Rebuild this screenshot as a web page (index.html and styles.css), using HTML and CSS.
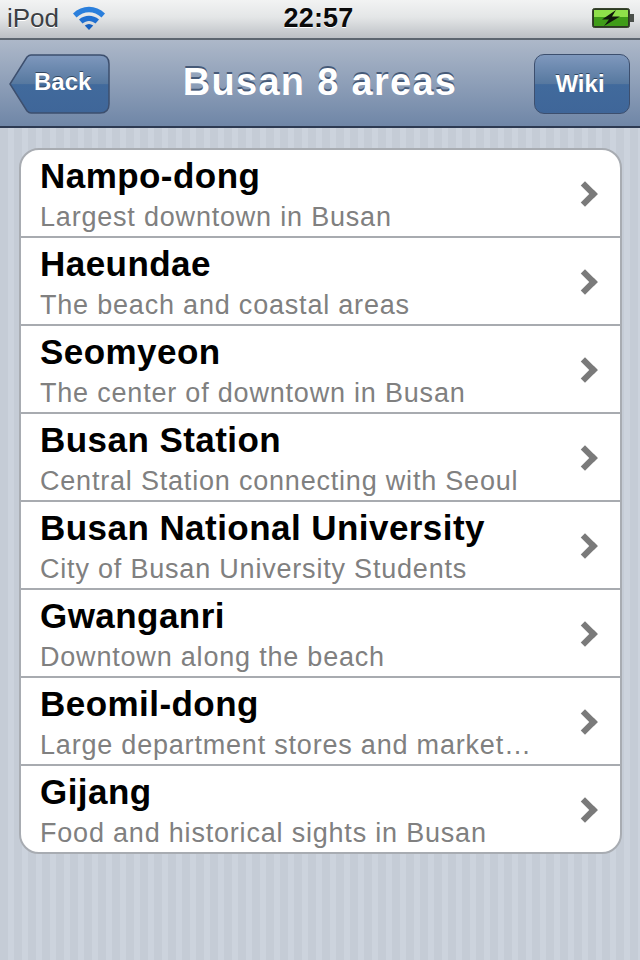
FILE: index.html

```html
<!DOCTYPE html>
<html lang="en">
<head>
    <meta charset="UTF-8">
    <meta name="viewport" content="width=device-width, initial-scale=1.0">
    <title>Busan 8 areas</title>
    <link rel="stylesheet" href="styles.css">
</head>
<body>
    <div class="status-bar">
        <div class="status-left">
            <span class="carrier">iPod</span>
            <svg class="wifi" width="32" height="24" viewBox="0 0 32 24">
                <path d="M0 7.500C9 -1.500 23 -1.500 32 7.500L28.500 11.500C21 4.500 11 4.500 3.500 11.500Z" fill="#2a7fdc"/>
                <path d="M6 13.500C12 8.500 20 8.500 26 13.500L22.500 17.500C18.500 14 13.500 14 9.500 17.500Z" fill="#1f6fd0"/>
                <path d="M16 24L11.800 19.500C14.500 17.500 17.500 17.500 20.200 19.500Z" fill="#1560c0"/>
            </svg>
        </div>
        <div class="clock">22:57</div>
        <div class="status-right">
            <svg class="battery" width="42" height="21" viewBox="0 0 42 21">
                <rect x="0.500" y="0.500" width="37" height="19" rx="2" fill="#2b3a22" stroke="#39452f"/>
                <rect x="2" y="2" width="34" height="16" fill="#3f9c18"/>
                <rect x="2" y="2" width="34" height="7" fill="#8fe04a"/>
                <rect x="38" y="6" width="4" height="8" fill="#4a4f4a"/>
                <path d="M24 2L10 11.500H17L12 18L28 8.500H20Z" fill="#10180c"/>
            </svg>
        </div>
    </div>

    <div class="nav-bar">
        <a class="back-btn">
            <svg class="back-shape" width="101" height="60" viewBox="0 0 101 60">
                <defs>
                    <linearGradient id="back-fill" x1="0" y1="0" x2="0" y2="1">
                        <stop offset="0" stop-color="#7f98bd"/>
                        <stop offset="0.500" stop-color="#56789f"/>
                        <stop offset="0.510" stop-color="#416a9c"/>
                        <stop offset="1" stop-color="#3f6699"/>
                    </linearGradient>
                </defs>
                <path d="M22 1H91Q100 1 100 10V50Q100 59 91 59H22Q20 59 18 57L1 30L18 3Q20 1 22 1Z" fill="url(#back-fill)" stroke="#3d4f6e" stroke-width="1.500"/>
            </svg>
            <span class="back-label">Back</span>
        </a>
        <h1 class="nav-title">Busan 8 areas</h1>
        <a class="wiki-btn">Wiki</a>
    </div>

    <ul class="area-list">
        <li class="area-row">
            <div class="area-text">
                <div class="area-name">Nampo-dong</div>
                <div class="area-desc">Largest downtown in Busan</div>
            </div>
            <span class="chevron"></span>
        </li>
        <li class="area-row">
            <div class="area-text">
                <div class="area-name">Haeundae</div>
                <div class="area-desc">The beach and coastal areas</div>
            </div>
            <span class="chevron"></span>
        </li>
        <li class="area-row">
            <div class="area-text">
                <div class="area-name">Seomyeon</div>
                <div class="area-desc">The center of downtown in Busan</div>
            </div>
            <span class="chevron"></span>
        </li>
        <li class="area-row">
            <div class="area-text">
                <div class="area-name">Busan Station</div>
                <div class="area-desc">Central Station connecting with Seoul</div>
            </div>
            <span class="chevron"></span>
        </li>
        <li class="area-row">
            <div class="area-text">
                <div class="area-name">Busan National University</div>
                <div class="area-desc">City of Busan University Students</div>
            </div>
            <span class="chevron"></span>
        </li>
        <li class="area-row">
            <div class="area-text">
                <div class="area-name">Gwanganri</div>
                <div class="area-desc">Downtown along the beach</div>
            </div>
            <span class="chevron"></span>
        </li>
        <li class="area-row">
            <div class="area-text">
                <div class="area-name">Beomil-dong</div>
                <div class="area-desc">Large department stores and market…</div>
            </div>
            <span class="chevron"></span>
        </li>
        <li class="area-row">
            <div class="area-text">
                <div class="area-name">Gijang</div>
                <div class="area-desc">Food and historical sights in Busan</div>
            </div>
            <span class="chevron"></span>
        </li>
    </ul>
</body>
</html>
```

FILE: styles.css

```css
* {
    margin: 0;
    padding: 0;
    box-sizing: border-box;
    font-family: 'Liberation Sans', Arial, sans-serif;
}

body {
    width: 640px;
    height: 960px;
    overflow: hidden;
    background: repeating-linear-gradient(90deg, #c5ccd6 0, #c5ccd6 8px, #ccd3dd 8px, #ccd3dd 14px);
}

.status-bar {
    height: 40px;
    display: flex;
    align-items: center;
    justify-content: space-between;
    padding: 0 6px 2px 7px;
    position: relative;
    background: linear-gradient(#f2f3f3, #e4e6e7 45%, #bcc0c5);
    border-bottom: 2px solid #5d6670;
}

.status-left {
    display: flex;
    align-items: center;
    gap: 14px;
}

.carrier {
    font-size: 26px;
    color: #3b3f44;
    text-shadow: 0 1px 0 #fff;
}

.clock {
    position: absolute;
    left: 0;
    right: 0;
    padding-right: 3px;
    text-align: center;
    font-size: 27px;
    font-weight: bold;
    letter-spacing: 0.2px;
    color: #0a0a0a;
    text-shadow: 0 1px 0 #fff;
}

.status-right {
    display: flex;
    align-items: center;
}

.nav-bar {
    height: 88px;
    display: flex;
    align-items: center;
    justify-content: space-between;
    padding: 2px 10px 0 9px;
    background: linear-gradient(#adb8c9, #6f86a7);
    border-bottom: 2px solid #2d3a52;
}

.back-btn {
    position: relative;
    display: block;
    width: 101px;
    height: 60px;
}

.back-shape {
    display: block;
}

.back-label {
    position: absolute;
    left: 25px;
    top: 14px;
    font-size: 24px;
    font-weight: bold;
    color: #fff;
    text-shadow: 0 -1px 0 #33475f;
}

.nav-title {
    margin: 0 4px 4px 0;
    font-size: 38px;
    font-weight: bold;
    letter-spacing: 1.3px;
    color: #fff;
    text-shadow: 0 -2px 0 #465a78;
}

.wiki-btn {
    width: 96px;
    height: 60px;
    display: flex;
    align-items: center;
    justify-content: center;
    padding-right: 4px;
    font-size: 24px;
    font-weight: bold;
    color: #fff;
    text-shadow: 0 -1px 0 #33475f;
    border: 1.500px solid #3d4f6e;
    border-radius: 10px;
    background: linear-gradient(#7f98bd, #56789f 50%, #416a9c 51%, #3f6699);
}

.area-list {
    list-style: none;
    width: 603px;
    margin: 20px 0 0 18.500px;
    background: #fff;
    border: 2px solid #a8acb2;
    border-radius: 20px;
    overflow: hidden;
}

.area-row {
    height: 88px;
    display: flex;
    align-items: center;
    justify-content: space-between;
    padding: 1px 22px 0 19.500px;
    border-bottom: 2px solid #a8abb0;
}

.area-row:last-child {
    height: 86px;
    border-bottom: none;
}

.area-name {
    font-size: 35px;
    font-weight: bold;
    letter-spacing: 0.45px;
    color: #000;
    line-height: 40px;
}

.area-desc {
    font-size: 27px;
    letter-spacing: 0.8px;
    color: #808080;
    line-height: 30px;
    margin-top: 6px;
}

.chevron {
    width: 18px;
    height: 18px;
    margin-right: 4px;
    border-top: 6px solid #7a7a7a;
    border-right: 6px solid #7a7a7a;
    transform: rotate(45deg);
}
```
